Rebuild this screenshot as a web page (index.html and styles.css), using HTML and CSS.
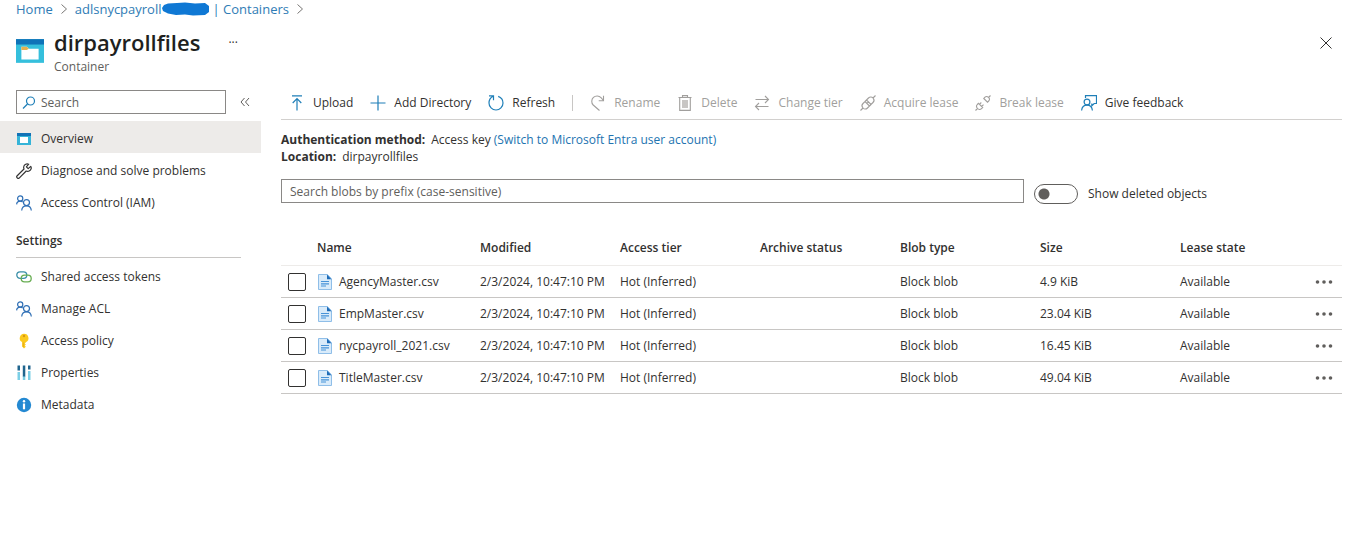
FILE: index.html
```html
<!DOCTYPE html>
<html lang="en">
<head>
<meta charset="utf-8">
<meta name="viewport" content="width=device-width, initial-scale=1">
<title>dirpayrollfiles - Container</title>
<link rel="stylesheet" href="styles.css">
</head>
<body>
<svg class="sprite" aria-hidden="true">
  <symbol id="container" viewBox="0 0 26 22">
    <rect width="26" height="22" fill="#35bfdc"/><rect width="26" height="5" fill="#0f73b8"/>
    <path d="M5 7h5l2 2h9v10H5z" fill="#fff"/><path d="M5 7h5l2 2-2 1H5z" fill="#e5b04d"/>
  </symbol>
  <symbol id="overview" viewBox="0 0 16 16">
    <rect x="1" y="2" width="14" height="12" fill="#35b4d8"/><rect x="1" y="2" width="14" height="3" fill="#1272b6"/><rect x="4" y="6" width="8" height="6" fill="#fff"/>
  </symbol>
  <symbol id="wrench" viewBox="0 0 16 16">
    <path d="M14.7 3.4 12.2 5.6 10.4 3.8 12.7 1.2C10.7.3 8.3 1.3 7.8 3.4 7.5 4.3 7.7 5.2 8 6L1.2 12.7a1.5 1.5 0 0 0 2.2 2.2L10.2 8c2 .9 4.300-.1 4.900-2.100.3-.9.1-1.800-.4-2.500z" fill="none" stroke="#333" stroke-width="1.200" stroke-linejoin="round"/>
  </symbol>
  <symbol id="people" viewBox="0 0 16 16">
    <g fill="none" stroke="#2f6fb5" stroke-width="1.200"><circle cx="4.200" cy="3.500" r="2.600"/><path d="M.6 9.400C.8 7.500 2.200 6.200 4.200 6.200c1 0 1.900.3 2.500.9"/><circle cx="10.500" cy="7.600" r="3"/><path d="M5.700 15.500c.2-2.800 2.100-4.700 4.800-4.700s4.600 1.900 4.800 4.700"/></g>
  </symbol>
  <symbol id="link" viewBox="0 0 16 16">
    <g fill="none" stroke-width="1.300"><rect x=".8" y="2.800" width="10" height="6.600" rx="3.300" stroke="#3a8fa8"/><rect x="5.200" y="6.200" width="10" height="6.600" rx="3.300" stroke="#67ad52"/></g>
  </symbol>
  <symbol id="key" viewBox="0 0 16 16">
    <path d="M8 .8a4.400 4.400 0 0 0-1.900 8.300v4.400L8 15.500l1.800-1.800-1-1.100 1-1.100-1-1.100 1.100-1.200A4.400 4.400 0 0 0 8 .8z" fill="#fbc91e"/><circle cx="8" cy="3" r="1.200" fill="#d99812"/><path d="M7.300 9.500v4.500" stroke="#e0a416" stroke-width=".8"/>
  </symbol>
  <symbol id="bars" viewBox="0 0 16 16">
    <path d="M1.500 7v8h2.500V7zM6.800 11v4h2.500v-4zM12 6v9h2.500V6z" fill="#7ccfe6"/><path d="M1.500.5v5h2.500v-5zM6.800.5v11h2.500V.5zM12 .5v4h2.500v-4z" fill="#20658e"/>
  </symbol>
  <symbol id="info" viewBox="0 0 16 16">
    <circle cx="8" cy="8" r="7.200" fill="#2489d2"/><circle cx="8" cy="4.200" r="1.200" fill="#fff"/><path d="M6.900 6.500h2.200v5.800H6.900z" fill="#fff"/>
  </symbol>
  <symbol id="search" viewBox="0 0 16 16">
    <circle cx="9.500" cy="6" r="4" /><path d="M6.500 9 2 13.500"/>
  </symbol>
  <symbol id="upload" viewBox="0 0 16 16"><path d="M3 .8h10M8 15.500V4M3.700 8 8 3.700 12.300 8"/></symbol>
  <symbol id="plus" viewBox="0 0 16 16"><path d="M8 .5v15M.5 8h15"/></symbol>
  <symbol id="refresh" viewBox="0 0 16 16"><path d="M1 .8h4.500v4.500M5.200 1.300C2.600 2.500 1 4.800 1 8a7 7 0 0 0 14 0c0-3.200-2-5.600-4.800-6.600"/></symbol>
  <symbol id="rename" viewBox="0 0 16 16"><path d="M9.500 15.500 3.200 10A5.300 5.300 0 0 1 11 2.700L13.500 5.500M13.500.8v5H8.700"/></symbol>
  <symbol id="trash" viewBox="0 0 16 16"><path d="M1.500 2.500h13M5.500 2.500V.6h5v1.900M2.700 2.500v12.900h10.600V2.500"/><path d="M5 5h6v8H5z" fill="#c8c6c4" stroke="none"/></symbol>
  <symbol id="swap" viewBox="0 0 16 16"><path d="M1.500 4.500h13M11 1l3.500 3.500L11 8M14.500 11.500h-13M5 8l-3.500 3.500L5 15"/></symbol>
  <symbol id="plug" viewBox="0 0 16 16"><path d="M.5 15.500 3 13M15.500.5 13 3M5 6.500 9.500 11 7.500 13C6 14.500 4.200 14.300 3 13s-1.500-3 0-4.500zM6.500 5l2-2C10 1.500 11.800 1.700 13 3s1.500 3 0 4.500l-2 2zM5 6.500 6.500 5M9.500 11l1.500-1.500M7 8.500 8.500 7"/></symbol>
  <symbol id="unplug" viewBox="0 0 16 16"><path d="M.5 15.500 2.500 13.500M15.500.5l-2 2M3.500 8.300l4.200 4.200-1.200 1.200c-1.200 1.200-2.900 1-4-.2s-1.300-2.800-.2-4zM8.800 3.500l3.700 3.700 1.200-1.200c1.200-1.200 1-2.500-.2-3.600s-2.400-1.300-3.500-.2zM4.500 9.300 6.300 7.500M6.700 11.500 8.500 9.700"/></symbol>
  <symbol id="feedback" viewBox="0 0 16 16"><path d="M4.500 3V.7h11v7.800h-2.300l-2.400 2.300V8.500"/><circle cx="6" cy="7" r="2.900"/><path d="M.6 15.500c.3-3.300 2.500-5.300 5.400-5.300s5.100 2 5.400 5.300"/></symbol>
  <symbol id="file" viewBox="0 0 16 16">
    <path d="M1.500.5h8.800l4.200 4.200v10.800h-13z" fill="#d9ebfa" stroke="#8fbee8"/><path d="M10 .5v4.700h4.500z" fill="#1c6bb8"/><path d="M4 7.500h8M4 9.800h8M4 12h5" stroke="#4793d8" stroke-width="1.200"/>
  </symbol>
  <symbol id="chevron" viewBox="0 0 8 12"><path d="M1.500 1.500 6.500 6l-5 4.500"/></symbol>
  <symbol id="collapse" viewBox="0 0 10 10"><path d="M4.500 1 1 5l3.500 4M9 1 5.500 5 9 9"/></symbol>
  <symbol id="close" viewBox="0 0 12 12"><path d="m.5.5 11 11M11.500.5l-11 11"/></symbol>
  <symbol id="dots" viewBox="0 0 18 4"><circle cx="2.500" cy="2" r="1.800"/><circle cx="9" cy="2" r="1.800"/><circle cx="15.500" cy="2" r="1.800"/></symbol>
  <symbol id="scribble" viewBox="0 0 48 14"><path d="M6 1.500 15 1l8-.5 10 1 10-.5 4 3v6l-4 3-12 .5-8-1-9 .5-8-1.500L1 9 0 6l2-3z"/></symbol>
</svg>

<header class="header">
  <nav class="crumbs" aria-label="Breadcrumb">
    <a href="#">Home</a>
    <svg class="chevron"><use href="#chevron"/></svg>
    <a href="#" class="account">adlsnycpayroll<svg class="scribble"><use href="#scribble"/></svg><span>| Containers</span></a>
    <svg class="chevron"><use href="#chevron"/></svg>
  </nav>
  <div class="heading">
    <svg class="resource"><use href="#container"/></svg>
    <div class="titles">
      <h1>dirpayrollfiles</h1>
      <p>Container</p>
    </div>
    <button class="title-more" aria-label="More">···</button>
    <button class="close" aria-label="Close"><svg><use href="#close"/></svg></button>
  </div>
</header>

<div class="layout">
  <aside class="sidebar">
    <div class="menu-search">
      <label class="search-box"><svg class="icon accent"><use href="#search"/></svg><input type="text" placeholder="Search" aria-label="Search menu"></label>
      <button class="collapse" aria-label="Collapse menu"><svg><use href="#collapse"/></svg></button>
    </div>
    <nav class="menu" aria-label="Container menu">
      <a href="#" class="item selected" aria-current="page"><svg class="icon"><use href="#overview"/></svg>Overview</a>
      <a href="#" class="item"><svg class="icon"><use href="#wrench"/></svg>Diagnose and solve problems</a>
      <a href="#" class="item"><svg class="icon"><use href="#people"/></svg>Access Control (IAM)</a>
      <h2>Settings</h2>
      <a href="#" class="item"><svg class="icon"><use href="#link"/></svg>Shared access tokens</a>
      <a href="#" class="item"><svg class="icon"><use href="#people"/></svg>Manage ACL</a>
      <a href="#" class="item"><svg class="icon"><use href="#key"/></svg>Access policy</a>
      <a href="#" class="item"><svg class="icon"><use href="#bars"/></svg>Properties</a>
      <a href="#" class="item"><svg class="icon"><use href="#info"/></svg>Metadata</a>
    </nav>
  </aside>

  <main class="content">
    <div class="toolbar" role="toolbar" aria-label="Container actions">
      <button><svg class="icon accent"><use href="#upload"/></svg>Upload</button>
      <button><svg class="icon accent"><use href="#plus"/></svg>Add Directory</button>
      <button><svg class="icon accent"><use href="#refresh"/></svg>Refresh</button>
      <span class="divider"></span>
      <button disabled><svg class="icon muted"><use href="#rename"/></svg>Rename</button>
      <button disabled><svg class="icon muted"><use href="#trash"/></svg>Delete</button>
      <button disabled><svg class="icon muted"><use href="#swap"/></svg>Change tier</button>
      <button disabled><svg class="icon muted"><use href="#plug"/></svg>Acquire lease</button>
      <button disabled><svg class="icon muted"><use href="#unplug"/></svg>Break lease</button>
      <button><svg class="icon accent"><use href="#feedback"/></svg>Give feedback</button>
    </div>

    <dl class="facts">
      <div><dt>Authentication method:</dt><dd>Access key <a href="#">(Switch to Microsoft Entra user account)</a></dd></div>
      <div><dt>Location:</dt><dd>dirpayrollfiles</dd></div>
    </dl>

    <div class="filters">
      <input class="prefix" type="text" placeholder="Search blobs by prefix (case-sensitive)" aria-label="Search blobs by prefix">
      <label class="switch"><input type="checkbox" role="switch">Show deleted objects</label>
    </div>

    <table class="blobs">
      <colgroup><col class="c-check"><col class="c-name"><col class="c-data"><col class="c-data"><col class="c-data"><col class="c-data"><col class="c-data"><col><col class="c-more"></colgroup>
      <thead>
        <tr><td></td><th scope="col">Name</th><th scope="col">Modified</th><th scope="col">Access tier</th><th scope="col">Archive status</th><th scope="col">Blob type</th><th scope="col">Size</th><th scope="col">Lease state</th><td></td></tr>
      </thead>
      <tbody>
        <tr><td><input type="checkbox" aria-label="Select AgencyMaster.csv"></td><td><a href="#" class="blob"><svg class="icon"><use href="#file"/></svg>AgencyMaster.csv</a></td><td>2/3/2024, 10:47:10 PM</td><td>Hot (Inferred)</td><td></td><td>Block blob</td><td>4.9 KiB</td><td>Available</td><td><button class="row-more" aria-label="More"><svg><use href="#dots"/></svg></button></td></tr>
        <tr><td><input type="checkbox" aria-label="Select EmpMaster.csv"></td><td><a href="#" class="blob"><svg class="icon"><use href="#file"/></svg>EmpMaster.csv</a></td><td>2/3/2024, 10:47:10 PM</td><td>Hot (Inferred)</td><td></td><td>Block blob</td><td>23.04 KiB</td><td>Available</td><td><button class="row-more" aria-label="More"><svg><use href="#dots"/></svg></button></td></tr>
        <tr><td><input type="checkbox" aria-label="Select nycpayroll_2021.csv"></td><td><a href="#" class="blob"><svg class="icon"><use href="#file"/></svg>nycpayroll_2021.csv</a></td><td>2/3/2024, 10:47:10 PM</td><td>Hot (Inferred)</td><td></td><td>Block blob</td><td>16.45 KiB</td><td>Available</td><td><button class="row-more" aria-label="More"><svg><use href="#dots"/></svg></button></td></tr>
        <tr><td><input type="checkbox" aria-label="Select TitleMaster.csv"></td><td><a href="#" class="blob"><svg class="icon"><use href="#file"/></svg>TitleMaster.csv</a></td><td>2/3/2024, 10:47:10 PM</td><td>Hot (Inferred)</td><td></td><td>Block blob</td><td>49.04 KiB</td><td>Available</td><td><button class="row-more" aria-label="More"><svg><use href="#dots"/></svg></button></td></tr>
      </tbody>
    </table>
  </main>
</div>
</body>
</html>
```
FILE: styles.css
```css
* { box-sizing: border-box; }

body {
  margin: 0;
  background: #fff;
  color: #323130;
  font: 12px/16px "Open Sans", "Noto Sans", sans-serif;
}

a { color: inherit; text-decoration: none; }
h1, h2, p, dl, dd { margin: 0; }
svg { display: block; flex: none; fill: none; stroke: currentColor; }

button {
  display: flex;
  align-items: center;
  padding: 0;
  border: 0;
  background: none;
  color: inherit;
  font: inherit;
}

input { font: inherit; color: inherit; }
input::placeholder { color: #605e5c; opacity: 1; }

.sprite { position: absolute; width: 0; height: 0; }
.icon { width: 16px; height: 16px; stroke: none; }
.accent { stroke: #1f7fb8; stroke-width: 1.2; }
.muted { stroke: #a19f9d; stroke-width: 1.1; }

.header { padding: 0 16px; }

.crumbs {
  display: flex;
  align-items: center;
  gap: 7px;
  height: 18px;
  color: #2f7cb5;
  font-size: 13px;
}
.account { display: flex; align-items: center; }
.account span { padding-left: 3px; }
.scribble { width: 48px; height: 14px; fill: #0f78d4; stroke: none; }
.chevron { width: 8px; height: 12px; stroke: #797775; }

.heading { display: flex; align-items: flex-start; padding-top: 8px; }
.resource { width: 28px; height: 24px; margin-top: 13px; stroke: none; }
.titles { margin-left: 10px; }
.titles h1 { font-size: 22px; line-height: 32px; font-weight: 600; color: #201f1e; }
.titles p { padding-top: 1px; line-height: 16px; color: #605e5c; }
.title-more { margin: 9px 0 0 28px; }
.close { margin: 11px 14px 0 auto; margin-right: 4px; padding-right: 10px; }
.close svg { width: 12px; height: 12px; }

.layout { display: flex; align-items: flex-start; padding-top: 10px; }
.sidebar { flex: none; width: 261px; padding-top: 5px; }
.menu-search { display: flex; align-items: center; gap: 14px; padding-left: 16px; }
.search-box {
  display: flex;
  flex: none;
  align-items: center;
  gap: 4px;
  width: 210px;
  height: 24px;
  padding: 1px 4px 0;
  border: 1px solid #8a8886;
}
.search-box input { flex: 1; min-width: 0; padding: 0; border: 0; outline: 0; background: none; }
.collapse svg { width: 10px; height: 10px; stroke: #605e5c; }

.menu { padding-top: 7px; }
.item { display: flex; align-items: center; gap: 9px; height: 32px; padding: 3px 0 0 16px; }
.selected { background: #edebe9; }
.menu h2 {
  margin: 7px 20px 1px 16px;
  padding: 9px 0 8px;
  border-bottom: 1px solid #c8c6c4;
  font-size: 12px;
  line-height: 16px;
  font-weight: 600;
}

.content { flex: 1; min-width: 0; padding: 0 20px; }

.toolbar {
  display: flex;
  align-items: center;
  gap: 17px;
  height: 35px;
  padding: 1px 0 0 8px;
  border-bottom: 1px solid #d2d0ce;
}
.toolbar button { gap: 8px; white-space: nowrap; }
.toolbar button:disabled { color: #a19f9d; }
.divider { width: 1px; height: 16px; background: #c8c6c4; }

.facts { padding-top: 11px; line-height: 17px; }
.facts div { display: flex; gap: 6px; }
.facts dt { font-weight: 700; }
.facts a { color: #2273b0; }

.filters { display: flex; align-items: flex-start; gap: 10px; padding-top: 14px; }
.prefix { flex: 1; min-width: 0; height: 24px; padding: 0 8px; border: 1px solid #8a8886; }
.switch { display: flex; align-items: center; gap: 10px; width: 308px; padding-top: 5px; }
.switch input {
  appearance: none;
  width: 44px;
  height: 20px;
  margin: 0;
  border: 1px solid #605e5c;
  border-radius: 10px;
  background: radial-gradient(circle at 9px 9px, #605e5c 5px, transparent 6px);
}

.blobs { width: 100%; margin-top: 25px; border-collapse: collapse; table-layout: fixed; }
.blobs th, .blobs td { height: 32px; padding: 2px 0 0; text-align: left; white-space: nowrap; border-bottom: 1px solid #c8c6c4; }
.blobs thead th, .blobs thead td { height: 36px; padding-top: 3px; border-bottom-color: #edebe9; font-weight: 600; }
.c-check { width: 36px; }
.c-name { width: 163px; }
.c-data { width: 140px; }
.c-more { width: 27px; }
.blobs input {
  display: block;
  appearance: none;
  width: 18px;
  height: 18px;
  margin: 0 0 0 7px;
  border: 1px solid #323130;
  border-radius: 2px;
}
.blob { display: flex; align-items: center; gap: 6px; }
.row-more svg { width: 18px; height: 4px; fill: #605e5c; stroke: none; }
```
